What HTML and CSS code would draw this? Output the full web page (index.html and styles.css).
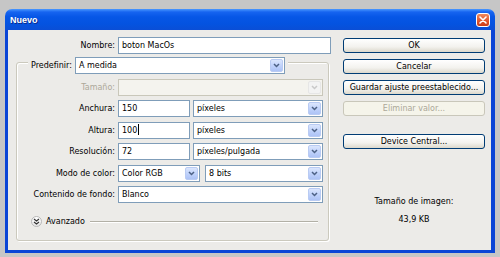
FILE: index.html
```html
<!DOCTYPE html>
<html lang="es">
<head>
    <meta charset="UTF-8">
    <meta name="viewport" content="width=device-width, initial-scale=1.0">
    <title>Nuevo</title>
    <link rel="stylesheet" href="styles.css">
</head>
<body>
    <div class="window">
        <div class="titlebar">
            <span class="title">Nuevo</span>
            <span class="close">
                <svg width="8" height="8" viewBox="0 0 8 8"><path d="M1 1 L7 7 M7 1 L1 7" stroke="#fff" stroke-width="1.6" stroke-linecap="round"/></svg>
            </span>
        </div>
        <div class="dialog">
            <div class="main">
                <div class="row name-row">
                    <label class="lbl">Nombre:</label>
                    <div class="input">boton MacOs</div>
                </div>

                <div class="group">
                    <div class="group-head">
                        <label class="lbl">Predefinir:</label>
                        <div class="select preset">
                            <span class="value">A medida</span>
                            <span class="arrow"><svg width="7" height="5" viewBox="0 0 7 5"><path d="M1 1 L3.5 3.5 L6 1" fill="none" stroke="#4d6185" stroke-width="1.5"/></svg></span>
                        </div>
                    </div>

                    <div class="rows">
                        <div class="row">
                            <label class="lbl off">Tamaño:</label>
                            <div class="select disabled">
                                <span class="value"></span>
                                <span class="arrow"><svg width="7" height="5" viewBox="0 0 7 5"><path d="M1 1 L3.5 3.5 L6 1" fill="none" stroke="#c9c9c9" stroke-width="1.5"/></svg></span>
                            </div>
                        </div>
                        <div class="row">
                            <label class="lbl">Anchura:</label>
                            <div class="pair">
                                <div class="input num">150</div>
                                <div class="select">
                                    <span class="value">píxeles</span>
                                    <span class="arrow"><svg width="7" height="5" viewBox="0 0 7 5"><path d="M1 1 L3.5 3.5 L6 1" fill="none" stroke="#4d6185" stroke-width="1.5"/></svg></span>
                                </div>
                            </div>
                        </div>
                        <div class="row">
                            <label class="lbl">Altura:</label>
                            <div class="pair">
                                <div class="input num">100<span class="caret"></span></div>
                                <div class="select">
                                    <span class="value">píxeles</span>
                                    <span class="arrow"><svg width="7" height="5" viewBox="0 0 7 5"><path d="M1 1 L3.5 3.5 L6 1" fill="none" stroke="#4d6185" stroke-width="1.5"/></svg></span>
                                </div>
                            </div>
                        </div>
                        <div class="row">
                            <label class="lbl">Resolución:</label>
                            <div class="pair">
                                <div class="input num">72</div>
                                <div class="select">
                                    <span class="value">píxeles/pulgada</span>
                                    <span class="arrow"><svg width="7" height="5" viewBox="0 0 7 5"><path d="M1 1 L3.5 3.5 L6 1" fill="none" stroke="#4d6185" stroke-width="1.5"/></svg></span>
                                </div>
                            </div>
                        </div>
                        <div class="row">
                            <label class="lbl">Modo de color:</label>
                            <div class="pair mode">
                                <div class="select color">
                                    <span class="value">Color RGB</span>
                                    <span class="arrow"><svg width="7" height="5" viewBox="0 0 7 5"><path d="M1 1 L3.5 3.5 L6 1" fill="none" stroke="#4d6185" stroke-width="1.5"/></svg></span>
                                </div>
                                <div class="select">
                                    <span class="value">8 bits</span>
                                    <span class="arrow"><svg width="7" height="5" viewBox="0 0 7 5"><path d="M1 1 L3.5 3.5 L6 1" fill="none" stroke="#4d6185" stroke-width="1.5"/></svg></span>
                                </div>
                            </div>
                        </div>
                        <div class="row">
                            <label class="lbl">Contenido de fondo:</label>
                            <div class="select">
                                <span class="value">Blanco</span>
                                <span class="arrow"><svg width="7" height="5" viewBox="0 0 7 5"><path d="M1 1 L3.5 3.5 L6 1" fill="none" stroke="#4d6185" stroke-width="1.5"/></svg></span>
                            </div>
                        </div>
                    </div>

                    <div class="advanced">
                        <span class="adv-icon">
                            <svg width="7" height="7" viewBox="0 0 7 7"><path d="M1 1 L3.5 3 L6 1 M1 4 L3.5 6 L6 4" fill="none" stroke="#333" stroke-width="1.1"/></svg>
                        </span>
                        <span class="adv-text">Avanzado</span>
                        <span class="adv-line"></span>
                    </div>
                </div>
            </div>

            <div class="side">
                <button class="btn">OK</button>
                <button class="btn">Cancelar</button>
                <button class="btn">Guardar ajuste preestablecido...</button>
                <button class="btn" disabled>Eliminar valor...</button>
                <button class="btn device">Device Central...</button>
                <div class="info">
                    <span>Tamaño de imagen:</span>
                    <span>43,9 KB</span>
                </div>
            </div>
        </div>
    </div>
</body>
</html>
```

FILE: styles.css
```css
* {
    box-sizing: border-box;
}

body {
    margin: 0;
    padding: 9px 0 0 5px;
    height: 257px;
    overflow: hidden;
    background: #c6c6c6;
    font-family: 'DejaVu Sans', sans-serif;
    font-size: 8px;
    color: #000;
}

.window {
    width: 490px;
}

.titlebar {
    height: 21px;
    display: flex;
    align-items: center;
    justify-content: space-between;
    padding: 0 5px;
    border-radius: 7px 7px 0 0;
    background: linear-gradient(#4a98ff 0, #1664f0 3px, #0656e6 8px, #0453e0 15px, #0a4ed6 21px);
}

.title {
    font-family: 'Liberation Sans', sans-serif;
    font-weight: bold;
    font-size: 9px;
    color: #fff;
    text-shadow: 1px 1px 0 #0a2a8a;
}

.close {
    width: 14px;
    height: 14px;
    display: flex;
    align-items: center;
    justify-content: center;
    border: 1px solid #fff;
    border-radius: 3px;
    background: linear-gradient(#f08a5e, #e0532b 60%, #c83c18);
}

.dialog {
    display: flex;
    height: 223px;
    border: solid #0a45d6;
    border-width: 0 4px 3px 3px;
    background: #ecebe8;
}

.main {
    width: 323px;
    padding-top: 7px;
}

.row {
    display: grid;
    grid-template-columns: 98px 205px;
    column-gap: 3px;
    align-items: center;
    height: 17px;
}

.name-row {
    grid-template-columns: 107px 213px;
}

.lbl {
    text-align: right;
    line-height: 17px;
    white-space: nowrap;
}

.lbl.off {
    color: #aca899;
}

.input,
.select {
    height: 17px;
    border: 1px solid #7f9db9;
    background: #fff;
    line-height: 15px;
    padding-left: 3px;
    white-space: nowrap;
}

.caret {
    display: inline-block;
    width: 1px;
    height: 11px;
    margin-left: 1px;
    vertical-align: -2px;
    background: #000;
}

.select {
    display: flex;
    justify-content: space-between;
    padding-right: 1px;
}

.arrow {
    width: 13px;
    height: 13px;
    margin-top: 1px;
    display: flex;
    align-items: center;
    justify-content: center;
    border-radius: 2px;
    border: 1px solid #b9cbf3;
    background: linear-gradient(#dbe6fd, #c1d3fb 50%, #adc3f6);
}

.select.disabled {
    border-color: #c9c7ba;
    background: #f4f3ee;
}

.select.disabled .arrow {
    border-color: #e6e6e6;
    background: #f3f3f3;
}

.group {
    margin: 8px 0 0 8px;
    width: 313px;
    padding-bottom: 11px;
    border: 1px solid #cbc9bd;
    border-radius: 3px;
    box-shadow: inset 1px 1px 0 #fff, 1px 1px 0 #fff;
}

.group-head {
    display: flex;
    align-items: center;
    gap: 3px;
    width: fit-content;
    margin: -6px 0 0 11px;
    padding: 0 3px;
    background: #ecebe8;
}

.preset {
    width: 210px;
}

.rows {
    display: flex;
    flex-direction: column;
    gap: 4.4px;
    margin-top: 5px;
}

.pair {
    display: flex;
    gap: 3px;
}

.pair .num {
    width: 72px;
}

.pair .select {
    flex: 1;
}

.pair.mode {
    gap: 5px;
}

.pair.mode .color {
    flex: none;
    width: 82px;
}

.advanced {
    display: flex;
    align-items: center;
    height: 14px;
    margin-top: 12px;
    padding-left: 14px;
}

.adv-icon {
    width: 11px;
    height: 11px;
    display: flex;
    align-items: center;
    justify-content: center;
    border: 1px solid #b8b8b8;
    border-radius: 50%;
    background: linear-gradient(#fff, #e6e6e6);
}

.adv-text {
    margin-left: 4px;
}

.adv-line {
    flex: 1;
    height: 2px;
    margin: 0 10px 0 5px;
    border-top: 1px solid #b2b0a6;
    border-bottom: 1px solid #fff;
}

.side {
    width: 142px;
    margin-left: 12px;
    padding-top: 8px;
    display: flex;
    flex-direction: column;
    gap: 6px;
}

.btn {
    height: 15px;
    padding: 0;
    border: 1px solid #003c74;
    border-radius: 3px;
    background: linear-gradient(#fff, #f3f2ee 60%, #dcd8cc);
    font-family: 'DejaVu Sans', sans-serif;
    font-size: 8px;
    color: #000;
    line-height: 13px;
}

.btn:disabled {
    border-color: #c9c7ba;
    background: #f5f4ea;
    color: #aca899;
}

.btn.device {
    margin-top: 12px;
}

.info {
    display: flex;
    flex-direction: column;
    align-items: center;
    gap: 6px;
    margin-top: 41px;
    line-height: 12px;
}
```
